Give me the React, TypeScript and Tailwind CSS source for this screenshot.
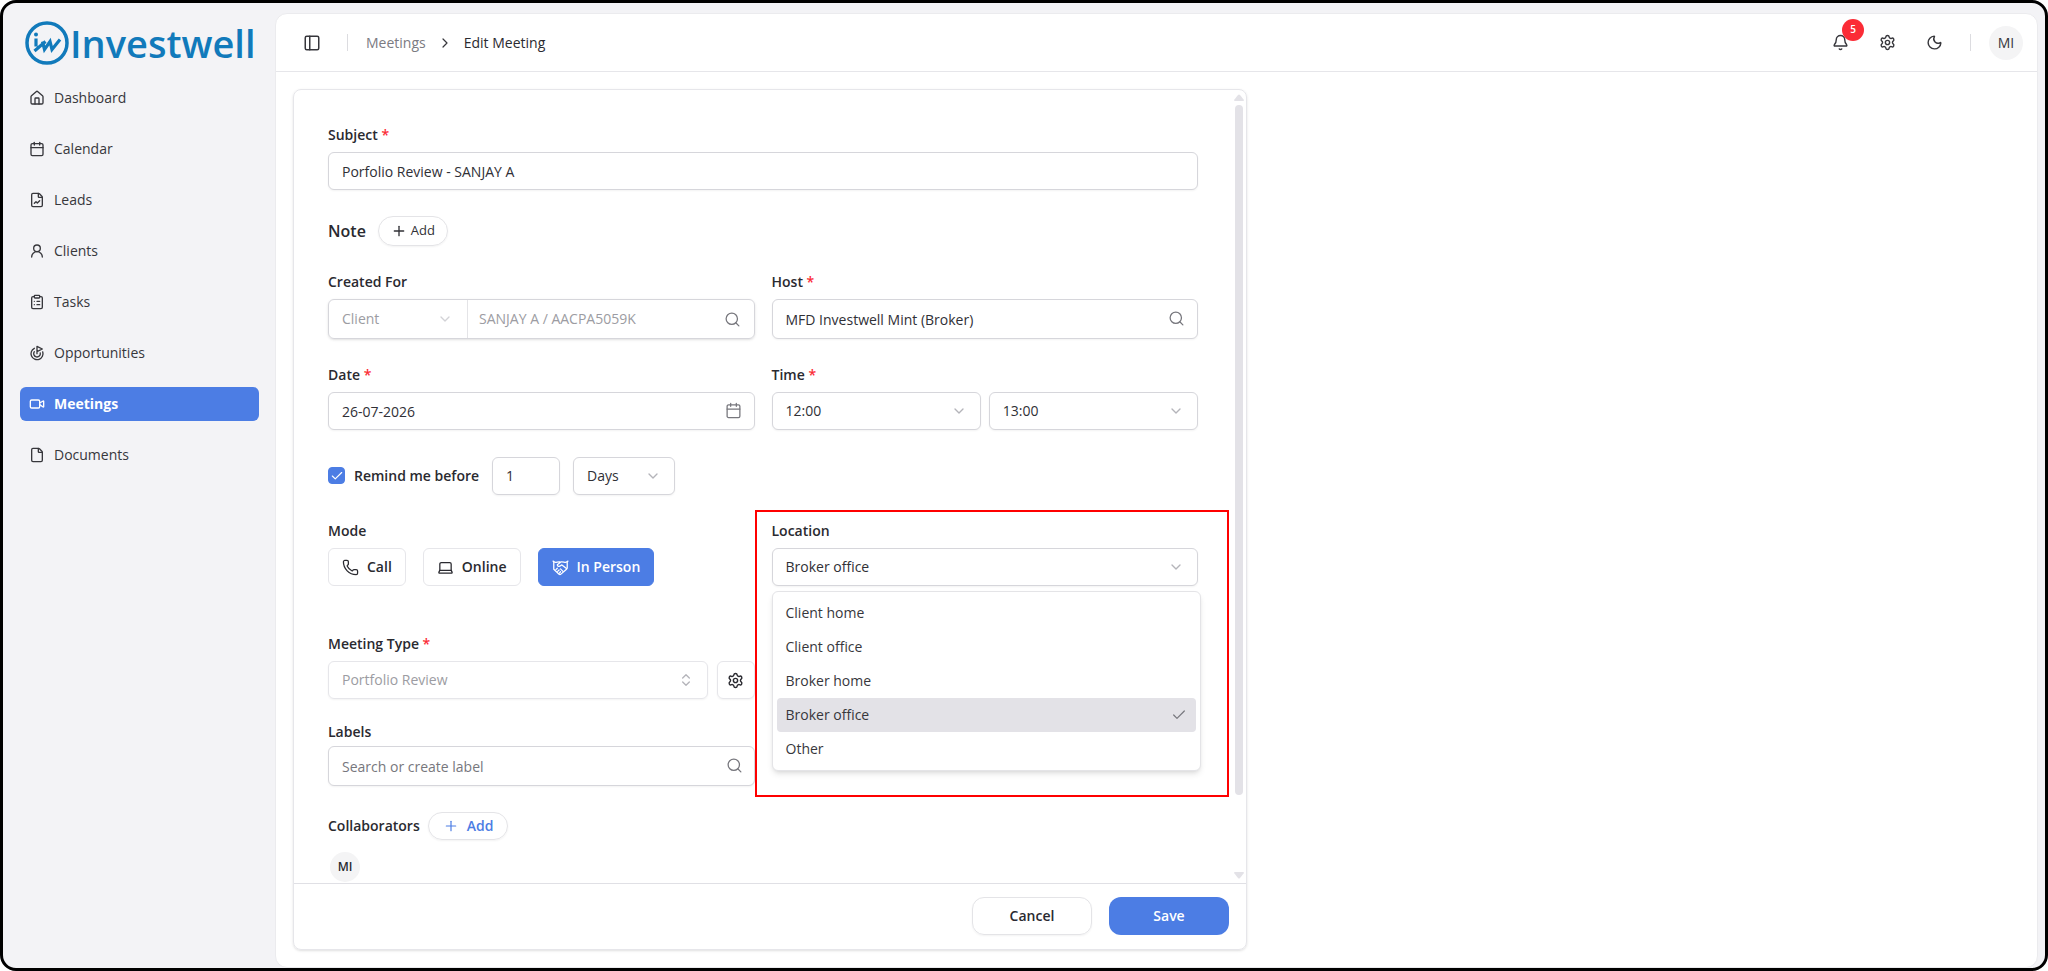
import type { ReactNode, SVGProps } from "react";
import { useState } from "react";
import {
  Bell,
  Calendar,
  Check,
  ChevronDown,
  ChevronRight,
  ChevronsUpDown,
  ClipboardList,
  File,
  FileChartLine,
  Goal,
  House,
  Laptop,
  Moon,
  PanelLeft,
  Phone,
  Plus,
  Search,
  Settings,
  UserRound,
  Video,
} from "lucide-react";
import clsx from "clsx";

const navItems = [
  { label: "Dashboard", icon: House },
  { label: "Calendar", icon: Calendar },
  { label: "Leads", icon: FileChartLine },
  { label: "Clients", icon: UserRound },
  { label: "Tasks", icon: ClipboardList },
  { label: "Opportunities", icon: Goal },
  { label: "Meetings", icon: Video, active: true },
  { label: "Documents", icon: File },
];

const modes = [
  { label: "Call", icon: Phone },
  { label: "Online", icon: Laptop },
  { label: "In Person", icon: ShakeHands },
];

const locations = [
  "Client home",
  "Client office",
  "Broker home",
  "Broker office",
  "Other",
];

const control =
  "w-full rounded-md border border-[#d6d6db] bg-white px-[13px] text-sm text-[#303036] shadow-xs outline-none";

function Logo(props: SVGProps<SVGSVGElement>) {
  return (
    <svg viewBox="0 0 44 44" fill="none" {...props}>
      <circle cx="22" cy="22" r="20" stroke="#117abb" strokeWidth="3.5" />
      <circle cx="11" cy="13.500" r="2" fill="#117abb" />
      <path
        d="M11 17.500v8M9.500 30l11-9.500M17.500 20.500l2 8 5.500-8 2 8 8-10"
        stroke="#117abb"
        strokeWidth="3.2"
      />
    </svg>
  );
}

function ShakeHands(props: SVGProps<SVGSVGElement>) {
  return (
    <svg
      viewBox="0 0 24 24"
      fill="none"
      stroke="currentColor"
      strokeLinecap="round"
      strokeLinejoin="round"
      {...props}
    >
      <path d="M1.500 3 4 4.500c2 .8 4-1 7-.5M22.500 3 20 4.500c-2 .8-4-1-7-.5l-5.500 4c0 2.500 3 3 4.500 1.500l2-1.200 6.500 5.200" />
      <path d="M2.500 4v10.500L10 21.500c1 .8 2 .5 3-.5l7.500-6.500c.7-.6 1-1 1-2V4" />
      <path d="m5.500 15 2-2M8 17.500l2-2M12 14l3.500 3.500M10.500 20l1.500-2" />
    </svg>
  );
}

function Label({
  htmlFor,
  required,
  children,
}: {
  htmlFor?: string;
  required?: boolean;
  children: ReactNode;
}) {
  return (
    <label
      htmlFor={htmlFor}
      className="block text-sm leading-5 font-semibold text-[#2a2a30]"
    >
      {children}
      {required && <span className="text-[#fb2c36]"> *</span>}
    </label>
  );
}

function Select({
  id,
  label,
  value,
  className,
}: {
  id?: string;
  label?: string;
  value: string;
  className?: string;
}) {
  return (
    <div className={clsx("relative", className)}>
      <select
        id={id}
        aria-label={label}
        className={clsx(control, "h-[38px] appearance-none")}
      >
        <option>{value}</option>
      </select>
      <ChevronDown className="pointer-events-none absolute top-1/2 right-3.5 size-4 -translate-y-1/2 text-[#b4b4ba]" />
    </div>
  );
}

function Sidebar() {
  return (
    <aside className="flex w-[272px] shrink-0 flex-col">
      <a href="#" className="mt-[18px] ml-[22px] flex items-center gap-px">
        <Logo className="size-11" />
        <span className="text-[38px] leading-11 font-semibold text-[#117abb]">
          Investwell
        </span>
      </a>
      <nav className="mt-4 mr-4 ml-[17px] flex flex-col gap-[17px]">
        {navItems.map(({ label, icon: Icon, active }) => (
          <a
            key={label}
            href="#"
            className={clsx(
              "flex h-[34px] items-center gap-[9px] rounded-md px-[9px] text-sm",
              active ? "bg-[#4c7de4] font-bold text-white" : "text-[#37373c]",
            )}
          >
            <Icon className="size-4" />
            {label}
          </a>
        ))}
      </nav>
    </aside>
  );
}

function Header() {
  return (
    <header className="flex h-[58px] shrink-0 items-center border-b border-[#e6e6ea] pr-[14px] pl-[27px] text-[#37373c]">
      <button aria-label="Toggle sidebar">
        <PanelLeft className="size-[18px]" />
      </button>
      <span className="ml-[26px] h-[17px] w-px bg-[#dcdce0]" />
      <nav className="ml-[18px] flex items-center gap-[11px] text-sm">
        <a href="#" className="text-[#7b7b82]">
          Meetings
        </a>
        <ChevronRight className="size-4" strokeWidth={1.8} />
        <span className="text-[#2a2a30]">Edit Meeting</span>
      </nav>
      <div className="ml-auto flex items-center gap-[13px]">
        <button
          aria-label="Notifications"
          className="relative grid size-[34px] place-items-center"
        >
          <Bell className="size-[17px]" />
          <span className="absolute -top-[7px] left-[19px] grid size-[22px] place-items-center rounded-full bg-[#fb2c36] text-[10px] font-semibold text-white">
            5
          </span>
        </button>
        <button
          aria-label="Settings"
          className="grid size-[34px] place-items-center"
        >
          <Settings className="size-[17px]" />
        </button>
        <button
          aria-label="Dark mode"
          className="grid size-[34px] place-items-center"
        >
          <Moon className="size-[17px]" />
        </button>
      </div>
      <span className="mr-[18px] ml-[19px] h-[17px] w-px bg-[#dcdce0]" />
      <button className="size-[34px] rounded-full bg-[#f4f4f5] text-sm">
        MI
      </button>
    </header>
  );
}

function LocationField() {
  const [location, setLocation] = useState("Broker office");

  return (
    <div className="relative flex flex-col gap-[7px]">
      <Label htmlFor="location">Location</Label>
      <Select id="location" value={location} />
      <ul
        role="listbox"
        aria-label="Location options"
        className="absolute top-[70px] -right-[3px] left-0 z-10 rounded-md border border-[#e4e4e7] bg-white p-1 shadow-md"
      >
        {locations.map(item => (
          <li
            key={item}
            role="option"
            aria-selected={item === location}
            onClick={() => setLocation(item)}
            className={clsx(
              "flex h-[34px] items-center justify-between rounded px-[9px] text-sm text-[#37373c]",
              item === location && "bg-[#e3e2e7]",
            )}
          >
            {item}
            {item === location && (
              <Check className="size-4 text-[#77777d]" strokeWidth={1.8} />
            )}
          </li>
        ))}
      </ul>
      <div className="pointer-events-none absolute -top-[11px] -right-[31px] -left-[17px] h-[287px] border-2 border-[#ff0000]" />
    </div>
  );
}

function Scrollbar() {
  return (
    <div
      aria-hidden
      className="mr-[2px] flex w-[10px] flex-col items-center py-1"
    >
      <svg viewBox="0 0 10 7" className="mb-1 h-[7px] w-[10px] fill-[#e3e2e7]">
        <path d="M4 1Q5 0 6 1L10 6Q10 7 9 7H1Q0 7 0 6Z" />
      </svg>
      <span className="w-2 grow-9 rounded-full bg-[#e3e2e7]" />
      <span className="grow" />
      <svg viewBox="0 0 10 7" className="h-[7px] w-[10px] fill-[#e3e2e7]">
        <path d="M4 6Q5 7 6 6L10 1Q10 0 9 0H1Q0 0 0 1Z" />
      </svg>
    </div>
  );
}

function MeetingForm() {
  const [mode, setMode] = useState("In Person");
  const [remind, setRemind] = useState(true);

  return (
    <form
      onSubmit={event => event.preventDefault()}
      className="flex w-full max-w-[954px] flex-1 flex-col rounded-lg border border-[#e6e6ea] shadow-sm"
    >
      <div className="flex flex-1">
        <div className="flex min-w-0 flex-1 flex-col gap-[26px] pt-[35px] pr-9 pl-[34px]">
          <div className="flex flex-col gap-[7px]">
            <Label htmlFor="subject" required>
              Subject
            </Label>
            <input
              id="subject"
              defaultValue="Porfolio Review - SANJAY A"
              className={clsx(control, "h-[38px]")}
            />
          </div>

          <div className="flex items-center gap-3">
            <h2 className="text-base font-semibold text-[#2a2a30]">Note</h2>
            <button
              type="button"
              className="flex h-[30px] items-center gap-1 rounded-full border border-[#e4e4e7] px-3 text-[13px] font-medium text-[#303036] shadow-xs"
            >
              <Plus className="size-4" />
              Add
            </button>
          </div>

          <div className="grid grid-cols-2 gap-x-[17px] gap-y-[26px]">
            <div className="flex flex-col gap-[7px]">
              <Label htmlFor="created-for">Created For</Label>
              <div className="flex h-10 rounded-md border border-[#d6d6db] text-sm text-[#9c9ca2] shadow-sm">
                <div className="relative w-[139px] border-r border-[#e4e4e7]">
                  <select
                    aria-label="Created for type"
                    disabled
                    className="h-full w-full appearance-none px-[13px]"
                  >
                    <option>Client</option>
                  </select>
                  <ChevronDown className="pointer-events-none absolute top-1/2 right-3.5 size-4 -translate-y-1/2 text-[#d2d2d6]" />
                </div>
                <input
                  id="created-for"
                  disabled
                  defaultValue="SANJAY A / AACPA5059K"
                  className="min-w-0 flex-1 px-[11px]"
                />
                <Search
                  className="mr-[13px] size-[17px] self-center text-[#77777d]"
                  strokeWidth={1.8}
                />
              </div>
            </div>
            <div className="flex flex-col gap-[7px]">
              <Label htmlFor="host" required>
                Host
              </Label>
              <div className="relative">
                <input
                  id="host"
                  defaultValue="MFD Investwell Mint (Broker)"
                  className={clsx(control, "h-10")}
                />
                <Search
                  className="absolute top-[11px] right-[13px] size-[17px] text-[#77777d]"
                  strokeWidth={1.8}
                />
              </div>
            </div>

            <div className="flex flex-col gap-[7px]">
              <Label htmlFor="date" required>
                Date
              </Label>
              <div className="relative">
                <input
                  id="date"
                  defaultValue="26-07-2026"
                  className={clsx(control, "h-[38px]")}
                />
                <Calendar
                  className="absolute top-[10px] right-[13px] size-[17px] text-[#77777d]"
                  strokeWidth={1.8}
                />
              </div>
            </div>
            <div className="flex flex-col gap-[7px]">
              <Label htmlFor="start" required>
                Time
              </Label>
              <div className="flex gap-2">
                <Select id="start" value="12:00" className="flex-1" />
                <Select label="End time" value="13:00" className="flex-1" />
              </div>
            </div>
          </div>

          <div className="flex h-[39px] items-center">
            <span className="relative size-[17px]">
              <input
                id="remind"
                type="checkbox"
                checked={remind}
                onChange={() => setRemind(!remind)}
                className="block size-[17px] appearance-none rounded-sm border border-[#4c7de4] checked:bg-[#4c7de4]"
              />
              {remind && (
                <Check className="pointer-events-none absolute inset-0 m-auto size-[14px] text-white" />
              )}
            </span>
            <div className="mr-[13px] ml-[9px]">
              <Label htmlFor="remind">Remind me before</Label>
            </div>
            <input
              aria-label="Reminder amount"
              defaultValue="1"
              className="mr-[13px] h-[38px] w-[68px] rounded-md border border-[#d6d6db] px-[13px] text-sm text-[#303036] shadow-xs"
            />
            <Select label="Reminder unit" value="Days" className="w-[102px]" />
          </div>

          <div className="grid grid-cols-2 gap-x-[17px]">
            <div className="flex flex-col gap-[7px]">
              <span className="text-sm leading-5 font-semibold text-[#2a2a30]">
                Mode
              </span>
              <div className="flex gap-[17px]">
                {modes.map(({ label, icon: Icon }) => (
                  <button
                    key={label}
                    type="button"
                    onClick={() => setMode(label)}
                    className={clsx(
                      "flex h-[38px] items-center gap-2 rounded-md border px-[13px] text-sm font-semibold",
                      mode === label
                        ? "border-[#4c7de4] bg-[#4c7de4] text-white"
                        : "border-[#e6e6ea] bg-white text-[#2a2a30]",
                    )}
                  >
                    <Icon className="size-[17px]" strokeWidth={1.8} />
                    {label}
                  </button>
                ))}
              </div>
            </div>
            <LocationField />
          </div>

          <div className="mt-[22px] grid grid-cols-2 gap-x-[17px]">
            <div className="flex flex-col gap-[7px]">
              <Label htmlFor="meeting-type" required>
                Meeting Type
              </Label>
              <div className="flex gap-[9px]">
                <div className="relative flex-1">
                  <select
                    id="meeting-type"
                    disabled
                    className="h-[38px] w-full appearance-none rounded-md border border-[#e6e6ea] px-[13px] text-sm text-[#9c9ca2] shadow-xs"
                  >
                    <option>Portfolio Review</option>
                  </select>
                  <ChevronsUpDown className="pointer-events-none absolute top-[11px] right-3.5 size-4 text-[#b4b4ba]" />
                </div>
                <button
                  type="button"
                  aria-label="Manage meeting types"
                  className="grid size-[38px] place-items-center rounded-md border border-[#e6e6ea] text-[#2a2a30] shadow-xs"
                >
                  <Settings className="size-[17px]" />
                </button>
              </div>
            </div>
          </div>

          <div className="-mt-[3px] grid grid-cols-2 gap-x-[17px]">
            <div className="flex flex-col gap-1">
              <Label htmlFor="labels">Labels</Label>
              <div className="relative">
                <input
                  id="labels"
                  placeholder="Search or create label"
                  className={clsx(control, "h-10 placeholder:text-[#77777d]")}
                />
                <Search
                  className="absolute top-[11px] right-3 size-[17px] text-[#77777d]"
                  strokeWidth={1.8}
                />
              </div>
            </div>
          </div>

          <div className="flex flex-col gap-3">
            <div className="flex items-center gap-2">
              <span className="text-sm leading-5 font-semibold text-[#2a2a30]">
                Collaborators
              </span>
              <button
                type="button"
                className="flex h-7 items-center gap-2 rounded-full border border-[#e4e4e7] px-[14px] text-sm font-semibold text-[#4c7de4] shadow-xs"
              >
                <Plus className="size-4" strokeWidth={1.8} />
                Add
              </button>
            </div>
            <span className="ml-[2px] grid size-[30px] place-items-center rounded-full bg-[#f4f4f5] text-xs font-semibold text-[#2a2a30]">
              MI
            </span>
          </div>
        </div>
        <Scrollbar />
      </div>

      <footer className="flex items-center justify-end gap-[17px] border-t border-[#e0e0e5] pt-[13px] pr-[17px] pb-[14px]">
        <button
          type="button"
          className="h-[38px] w-[120px] rounded-xl border border-[#e4e4e7] text-sm font-semibold text-[#2a2a30] shadow-xs"
        >
          Cancel
        </button>
        <button className="h-[38px] w-[120px] rounded-xl bg-[#4c7de4] text-sm font-semibold text-white">
          Save
        </button>
      </footer>
    </form>
  );
}

function App() {
  return (
    <div className="flex min-h-screen bg-white font-['Open_Sans','Noto_Sans',sans-serif]">
      <div className="flex flex-1 rounded-2xl border-3 border-black bg-[#f3f3f6]">
        <Sidebar />
        <main className="mt-[10px] mr-[7px] flex min-w-0 flex-1 flex-col rounded-xl border border-[#ebebee] bg-white">
          <Header />
          <div className="flex flex-1 flex-col p-[17px]">
            <MeetingForm />
          </div>
        </main>
      </div>
    </div>
  );
}

export default App;
